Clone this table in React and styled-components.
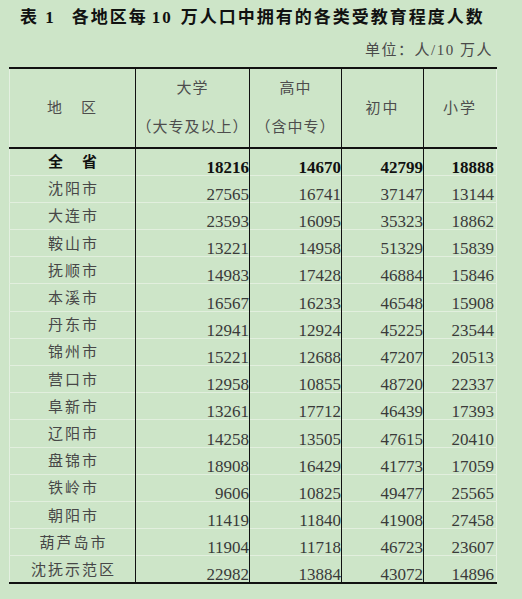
import React from "react";
import styled, { createGlobalStyle } from "styled-components";

const GlobalStyle = createGlobalStyle`
  html, body {
    margin: 0;
    padding: 0;
    background: #cde5c8;
  }

  body {
    font-family: "Liberation Serif", "Noto Sans CJK SC", serif;
  }
`;

const Page = styled.div`
  width: 522px;
  height: 599px;
  background: #cde5c8;
  overflow: hidden;
`;

const Title = styled.h1`
  margin: 0;
  padding: 8px 0 0 20px;
  font-size: 17px;
  font-weight: 700;
  line-height: 20px;
  letter-spacing: 2px;
  color: #111;
  white-space: nowrap;
`;

const Gap = styled.span`
  display: inline-block;
  width: ${props => props.w}px;
`;

const Unit = styled.div`
  margin: 12px 29px 7px 0;
  text-align: right;
  font-size: 15px;
  line-height: 20px;
  letter-spacing: 1.5px;
  color: #4a4a4a;
`;

const Table = styled.table`
  margin-left: 9px;
  width: 487px;
  border-collapse: collapse;
  table-layout: fixed;
  border-top: 2px solid #111;
  border-bottom: 2px solid #111;
  border-left: 1px solid #e4f0e1;
  border-right: 1px solid #e4f0e1;
`;

const HeadCell = styled.th`
  height: 76px;
  padding: 0;
  font-weight: 400;
  font-size: 15px;
  line-height: 39px;
  letter-spacing: ${props => props.spaced ? "2px" : "1px"};
  color: #4d4d4d;
  text-align: center;
  vertical-align: middle;
  border-bottom: 2px solid #111;
  border-right: ${props => props.last ? "none" : "1px solid #111"};
`;

const Row = styled.tr`
  height: 27.2px;
  border-bottom: 1px solid #e2efde;

  &:last-child {
    border-bottom: none;
  }
`;

const NameCell = styled.td`
  padding: 1px 0 0 2px;
  font-size: 15px;
  font-weight: ${props => props.bold ? 700 : 400};
  letter-spacing: 2px;
  line-height: 20px;
  color: ${props => props.bold ? "#111" : "#474747"};
  text-align: center;
  vertical-align: middle;
  white-space: nowrap;
  border-right: 1px solid #111;
`;

const NumCell = styled.td`
  padding: 0 ${props => props.last ? "2px" : "0"} 0 0;
  font-size: 17px;
  font-weight: ${props => props.bold ? 700 : 400};
  line-height: 14px;
  color: ${props => props.bold ? "#111" : "#3a3a3a"};
  text-align: right;
  vertical-align: bottom;
  border-right: ${props => props.last ? "none" : "1px solid #111"};
`;

const rows = [
  ["沈阳市", 27565, 16741, 37147, 13144],
  ["大连市", 23593, 16095, 35323, 18862],
  ["鞍山市", 13221, 14958, 51329, 15839],
  ["抚顺市", 14983, 17428, 46884, 15846],
  ["本溪市", 16567, 16233, 46548, 15908],
  ["丹东市", 12941, 12924, 45225, 23544],
  ["锦州市", 15221, 12688, 47207, 20513],
  ["营口市", 12958, 10855, 48720, 22337],
  ["阜新市", 13261, 17712, 46439, 17393],
  ["辽阳市", 14258, 13505, 47615, 20410],
  ["盘锦市", 18908, 16429, 41773, 17059],
  ["铁岭市", 9606, 10825, 49477, 25565],
  ["朝阳市", 11419, 11840, 41908, 27458],
  ["葫芦岛市", 11904, 11718, 46723, 23607],
  ["沈抚示范区", 22982, 13884, 43072, 14896],
];

function DataRow({ name, values, bold }) {
  return (
    <Row>
      <NameCell bold={bold}>{name}</NameCell>
      {values.map((v, i) => (
        <NumCell key={i} bold={bold} last={i === values.length - 1}>
          {v}
        </NumCell>
      ))}
    </Row>
  );
}

export default function App() {
  return (
    <Page>
      <GlobalStyle />
      <Title>
        表 1<Gap w={16} />各地区每<Gap w={4} />10<Gap w={8} />万人口中拥有的各类受教育程度人数
      </Title>
      <Unit>单位：人/10 万人</Unit>
      <Table>
        <colgroup>
          <col style={{ width: 126 }} />
          <col style={{ width: 114 }} />
          <col style={{ width: 92 }} />
          <col style={{ width: 82 }} />
          <col style={{ width: 73 }} />
        </colgroup>
        <thead>
          <tr>
            <HeadCell spaced>地　区</HeadCell>
            <HeadCell>
              大学
              <br />
              （大专及以上）
            </HeadCell>
            <HeadCell>
              高中
              <br />
              （含中专）
            </HeadCell>
            <HeadCell spaced>初中</HeadCell>
            <HeadCell spaced last>小学</HeadCell>
          </tr>
        </thead>
        <tbody>
          <DataRow name="全　省" values={[18216, 14670, 42799, 18888]} bold />
          {rows.map(([name, ...values]) => (
            <DataRow key={name} name={name} values={values} />
          ))}
        </tbody>
      </Table>
    </Page>
  );
}
